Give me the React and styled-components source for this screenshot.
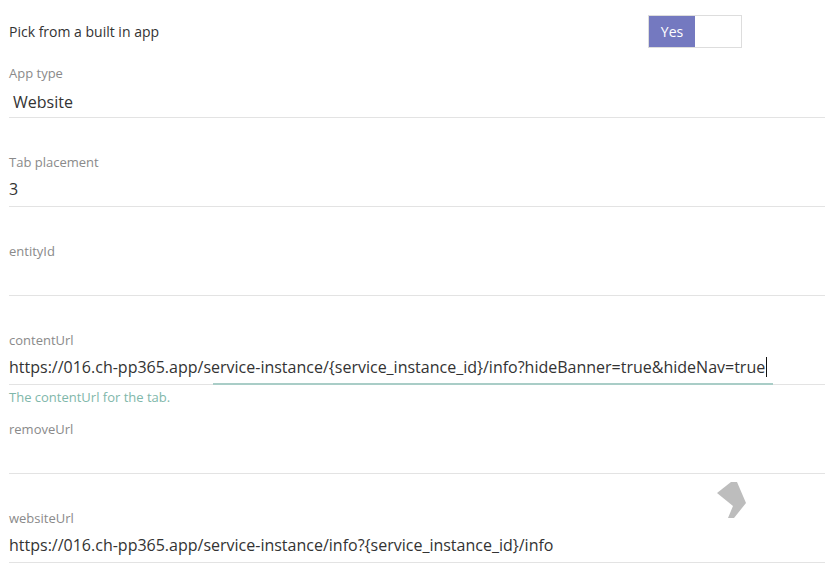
import React from "react";
import styled, { createGlobalStyle } from "styled-components";

const GlobalStyle = createGlobalStyle`
    body {
        margin: 0;
        background: #ffffff;
        font-family: "Open Sans", "Noto Sans", sans-serif;
        color: #333333;
    }
`;

const fields = [
    { label: "App type", value: "Website", select: true },
    { label: "Tab placement", value: "3" },
    { label: "entityId", value: "" },
    {
        label: "contentUrl",
        value: "https://016.ch-pp365.app/service-instance/{service_instance_id}/info?hideBanner=true&hideNav=true",
        help: "The contentUrl for the tab.",
        focused: true,
    },
    { label: "removeUrl", value: "" },
    { label: "websiteUrl", value: "https://016.ch-pp365.app/service-instance/info?{service_instance_id}/info" },
];

const App = () => {
    return (
        <Page>
            <GlobalStyle />
            <ToggleRow>
                <RowLabel>Pick from a built in app</RowLabel>
                <Toggle>
                    <ToggleOn>Yes</ToggleOn>
                    <ToggleOff />
                </Toggle>
            </ToggleRow>

            {fields.map((field, index) => {
                return (
                    <Field key={index}>
                        <Label>{field.label}</Label>
                        <Value $select={field.select}>
                            {field.value}
                            {field.focused && <Caret />}
                            {field.focused && <FocusBar />}
                        </Value>
                        <Help>{field.help}</Help>
                    </Field>
                );
            })}

            {/* drag handle floating over the list */}
            <Handle viewBox="0 0 31 38" width="31" height="38">
                <polygon points="15,1 21,1 30,22 18,37 12,37 17,25 1,12" fill="#bdbdbd" />
            </Handle>
        </Page>
    );
};

const Page = styled.div`
    position: relative;
    padding-left: 9px;
    height: 572px;
    overflow: hidden;
`;

const ToggleRow = styled.div`
    display: flex;
    align-items: center;
    justify-content: space-between;
    height: 33px;
    padding: 15px 83px 3px 0;
`;

const RowLabel = styled.div`
    font-size: 14px;
    color: #333333;
`;

const Toggle = styled.div`
    display: flex;
    width: 92px;
    height: 31px;
    border: 1px solid #dddddd;
`;

const ToggleOn = styled.div`
    width: 46px;
    display: flex;
    align-items: center;
    justify-content: center;
    background: #7479c0;
    color: #ffffff;
    font-size: 14px;
`;

const ToggleOff = styled.div`
    flex: 1;
    background: #ffffff;
`;

const Field = styled.div`
    padding-top: 13px;
`;

const Label = styled.div`
    height: 18px;
    line-height: 18px;
    font-size: 13px;
    color: #8a8a8a;
`;

const Value = styled.div`
    position: relative;
    display: flex;
    align-items: center;
    box-sizing: border-box;
    height: 36px;
    padding: ${(p) => (p.$select ? "4px 0 0 4px" : "0")};
    border-bottom: 1px solid #e3e3e3;
    font-size: 16px;
    color: #333333;
    white-space: nowrap;
`;

const Caret = styled.span`
    display: inline-block;
    width: 1px;
    height: 20px;
    margin-left: 1px;
    background: #111111;
`;

const FocusBar = styled.span`
    position: absolute;
    left: 204px;
    bottom: -1px;
    width: 560px;
    height: 2px;
    background: #a9cdc7;
`;

const Help = styled.div`
    margin-top: 3px;
    height: 19px;
    line-height: 19px;
    font-size: 13px;
    color: #7fb7aa;
`;

const Handle = styled.svg`
    position: absolute;
    left: 716px;
    top: 481px;
`;

export default App;
